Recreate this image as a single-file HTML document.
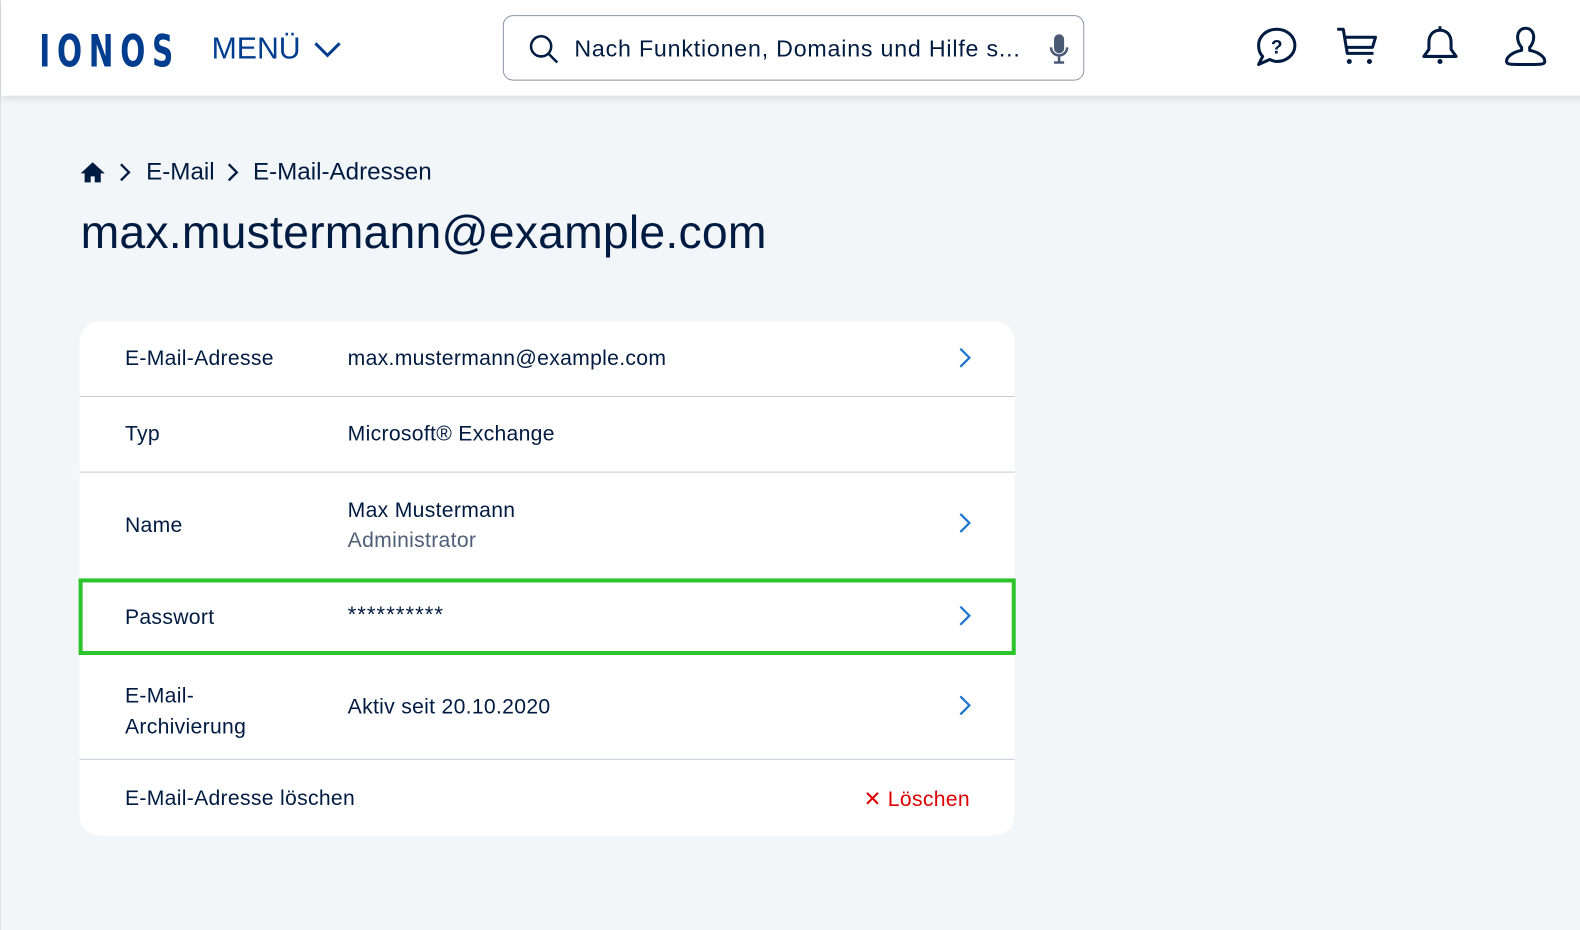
<!DOCTYPE html>
<html><head><meta charset="utf-8"><style>
*{margin:0;padding:0;box-sizing:border-box}
html,body{width:1580px;height:930px;overflow:hidden}
body{background:#f3f6f9;font-family:"Liberation Sans","DejaVu Sans",sans-serif;color:#001b41;position:relative;border-left:1px solid #dde2e8}
#w{position:absolute;left:0;top:0;width:1568px;height:923px;transform:scale(1.0077);transform-origin:0 0}
.hdr{position:absolute;left:0;top:0;width:1580px;height:95px;background:#fff;box-shadow:0 2px 8px rgba(0,0,0,.15)}
.logo{position:absolute;left:38px;top:26px;font-size:44px;font-weight:bold;color:#003d8f;letter-spacing:9px;transform:scaleX(.74);transform-origin:left;font-family:"DejaVu Sans Condensed","Liberation Sans Narrow",sans-serif}
.menu{position:absolute;left:209px;top:32px;font-size:30px;color:#003d8f}
.search{position:absolute;left:498px;top:15px;width:577px;height:65px;border:1px solid #8a95a5;border-radius:10px}
.search span{position:absolute;left:70px;top:19px;font-size:23px;letter-spacing:.8px;color:#001b41}
.ico{position:absolute;top:24px}
.bc{position:absolute;left:78px;top:157px;font-size:24px;display:flex;align-items:center}
h1{position:absolute;left:79px;top:203px;font-size:46px;font-weight:normal;letter-spacing:.2px}
.card{position:absolute;left:78px;top:319px;width:928px;height:510px;background:#fff;border-radius:20px;overflow:hidden}
.row{position:absolute;left:0;width:928px;border-bottom:1px solid #c2ccd8;font-size:21px;letter-spacing:.3px}
.l{position:absolute;left:45px}
.v{position:absolute;left:266px}
.chev{position:absolute;left:872px}
</style></head><body><div id="w">
<div class="hdr">
<div class="logo">IONOS</div>
<div class="menu">MENÜ <svg width="28" height="18" viewBox="0 0 28 18" style="margin-left:4px"><path d="M2 3l12 12 12-12" fill="none" stroke="#003d8f" stroke-width="3"/></svg></div>
<div class="search">
<svg style="position:absolute;left:24px;top:17px" width="32" height="32" viewBox="0 0 32 32"><circle cx="13" cy="13" r="10" fill="none" stroke="#001b41" stroke-width="2.5"/><path d="M20 20l9 9" stroke="#001b41" stroke-width="2.5"/></svg>
<span>Nach Funktionen, Domains und Hilfe s...</span>
<svg style="position:absolute;left:540px;top:17px" width="22" height="32" viewBox="0 0 22 32"><rect x="6" y="1" width="10" height="19" rx="5" fill="#4a5a75"/><path d="M3 14a8 8 0 0 0 16 0M11 22v6M6 29h10" fill="none" stroke="#4a5a75" stroke-width="2.5"/></svg>
</div>
<svg class="ico" style="left:1244px" width="44" height="46" viewBox="0 0 44 46"><path d="M22 5c10 0 18 7 18 16s-8 16-18 16c-3 0-5-1-7-2l-11 5 4-8c-3-3-4-7-4-11C4 12 12 5 22 5z" fill="none" stroke="#001b41" stroke-width="3" stroke-linejoin="round"/><text x="22" y="29" font-size="19" font-weight="bold" text-anchor="middle" fill="#001b41" font-family="Liberation Sans">?</text></svg>
<svg class="ico" style="left:1324px" width="44" height="46" viewBox="0 0 44 46"><path d="M2 5h6l4 24h26M10 13h30l-3 10H12" fill="none" stroke="#001b41" stroke-width="3" stroke-linejoin="round"/><circle cx="14" cy="37" r="2.5" fill="#001b41"/><circle cx="34" cy="37" r="2.5" fill="#001b41"/></svg>
<svg class="ico" style="left:1406px" width="44" height="46" viewBox="0 0 44 46"><path d="M22 6c-7 0-11 5-11 12v7l-5 7h32l-5-7v-7c0-7-4-12-11-12z" fill="none" stroke="#001b41" stroke-width="3" stroke-linejoin="round"/><path d="M22 2v4" stroke="#001b41" stroke-width="3"/><circle cx="22" cy="37" r="2.5" fill="#001b41"/></svg>
<svg class="ico" style="left:1490px" width="46" height="46" viewBox="0 0 46 46"><path d="M23 4c-5 0-8 4-8 9 0 4 2 8 4 10v3c-6 1-15 5-15 11 0 3 4 3 19 3s19 0 19-3c0-6-9-10-15-11v-3c2-2 4-6 4-10 0-5-3-9-8-9z" fill="none" stroke="#001b41" stroke-width="3" stroke-linejoin="round"/></svg>
</div>
<div class="bc">
<svg width="26" height="24" viewBox="0 0 26 24"><path d="M13 2L1 13h4v9h6v-6h4v6h6v-9h4z" fill="#001b41"/></svg>
<svg width="40" height="24" viewBox="0 0 40 24"><path d="M15 4l8 8-8 8" fill="none" stroke="#001b41" stroke-width="2.3"/></svg>
<span>E-Mail</span>
<svg width="38" height="24" viewBox="0 0 38 24"><path d="M14 4l8 8-8 8" fill="none" stroke="#001b41" stroke-width="2.3"/></svg>
<span>E-Mail-Adressen</span>
</div>
<h1>max.mustermann@example.com</h1>
<div class="card">
<div class="row" style="top:0;height:75px"><span class="l" style="top:25px">E-Mail-Adresse</span><span class="v" style="top:25px">max.mustermann@example.com</span><svg class="chev" style="top:25px" width="14" height="22" viewBox="0 0 14 22"><path d="M2 2l9 9-9 9" fill="none" stroke="#1a73cc" stroke-width="2.2"/></svg></div>
<div class="row" style="top:75px;height:75px"><span class="l" style="top:25px">Typ</span><span class="v" style="top:25px">Microsoft® Exchange</span></div>
<div class="row" style="top:150px;height:106px;border:none"><span class="l" style="top:41px">Name</span><span class="v" style="top:26px">Max Mustermann</span><span class="v" style="top:56px;color:#4f5f78">Administrator</span><svg class="chev" style="top:39px" width="14" height="22" viewBox="0 0 14 22"><path d="M2 2l9 9-9 9" fill="none" stroke="#1a73cc" stroke-width="2.2"/></svg></div>
<div class="row" style="top:330px;height:105px"><span class="l" style="top:26px;line-height:31px">E-Mail-<br>Archivierung</span><span class="v" style="top:41px">Aktiv seit 20.10.2020</span><svg class="chev" style="top:40px" width="14" height="22" viewBox="0 0 14 22"><path d="M2 2l9 9-9 9" fill="none" stroke="#1a73cc" stroke-width="2.2"/></svg></div>
<div class="row" style="top:435px;height:75px;border:none"><span class="l" style="top:27px">E-Mail-Adresse löschen</span><span style="position:absolute;left:778px;top:27px;color:#d00">✕ Löschen</span></div>
</div>
<div style="position:absolute;left:77px;top:574px;width:930px;height:76px;border:4px solid #2bc42b;background:#fff;font-size:21px;letter-spacing:.3px">
<span style="position:absolute;left:42px;top:23px">Passwort</span><span style="position:absolute;left:263px;top:19px;font-size:22px;letter-spacing:1px">**********</span><svg style="position:absolute;left:869px;top:22px" width="14" height="22" viewBox="0 0 14 22"><path d="M2 2l9 9-9 9" fill="none" stroke="#1a73cc" stroke-width="2.2"/></svg>
</div>
</div></body></html>
